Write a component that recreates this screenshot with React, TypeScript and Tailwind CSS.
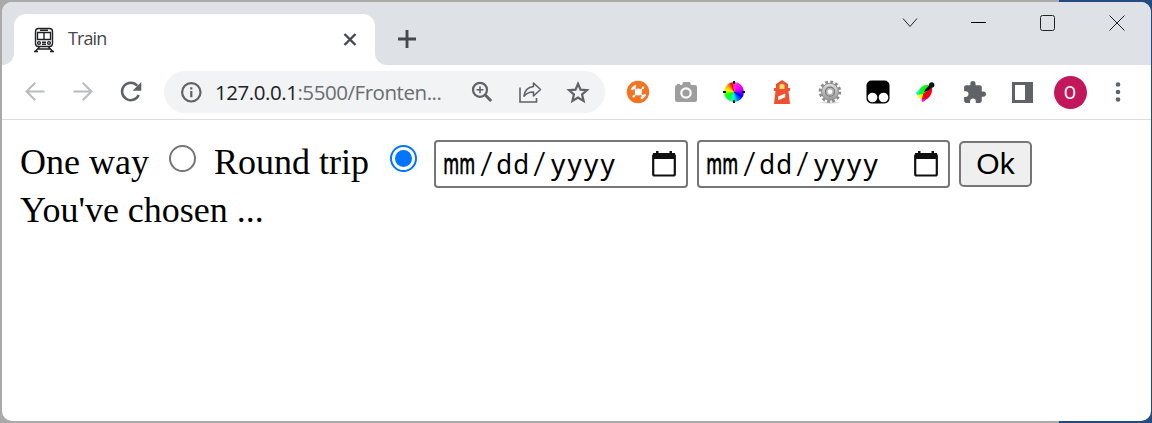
import type { ReactNode } from "react";

function Slot({ children }: { children: ReactNode }) {
  return <div className="flex h-[54px] w-12 shrink-0 items-center justify-center">{children}</div>;
}

function TrainIcon() {
  return (
    <svg width="24" height="26" viewBox="0 0 24 26" fill="none" stroke="#202124" strokeWidth="1.4">
      <rect x="3.5" y="1.5" width="17" height="18" rx="3" />
      <path d="M8 3.2h8M5.5 5.5h13v7h-13zM12 5.5v7" />
      <circle cx="7" cy="16" r="1.4" />
      <circle cx="17" cy="16" r="1.4" />
      <path d="M10 15.2h4M10 17.2h4M7.5 20L3 24.500M16.5 20l4.500 4.500M6 22h12M2 24.500h4M18 24.500h4" />
    </svg>
  );
}

function BackIcon({ flip = false }: { flip?: boolean }) {
  return (
    <svg width="22" height="22" viewBox="0 0 22 22" className={flip ? "-scale-x-100" : ""} fill="none" stroke="#b9bbbe" strokeWidth="2">
      <path d="M20.500 10.500H2.500M11.300 1.800L2.500 10.500l8.800 8.700" />
    </svg>
  );
}

function ReloadIcon() {
  return (
    <svg width="22" height="22" viewBox="0 0 22 22">
      <path d="M18.700 14A8.700 8.700 0 1 1 17.300 4.700" fill="none" stroke="#5f6368" strokeWidth="2.500" />
      <path d="M21.300 1v8.700h-8.700z" fill="#5f6368" />
    </svg>
  );
}

function InfoIcon() {
  return (
    <svg width="22" height="22" viewBox="0 0 22 22">
      <circle cx="11.300" cy="11.300" r="9.200" fill="none" stroke="#5f6368" strokeWidth="2.200" />
      <path d="M10.200 6.200h2.200v2.300h-2.200zM10.200 10h2.200v6.300h-2.200z" fill="#5f6368" />
    </svg>
  );
}

function ZoomIcon() {
  return (
    <svg width="22" height="22" viewBox="0 0 22 22" fill="none" stroke="#5f6368">
      <circle cx="9" cy="8.800" r="7" strokeWidth="2.200" />
      <path d="M14 13.800l6.200 6.200" strokeWidth="3" />
      <path d="M9 5.300v7M5.500 8.800h7" strokeWidth="1.600" />
    </svg>
  );
}

function ShareIcon() {
  return (
    <svg width="24" height="24" viewBox="0 0 24 24" fill="none" stroke="#5f6368" strokeWidth="1.600">
      <path d="M2 7.500v14.500h16.500v-4" />
      <path d="M15.500 3l7 6.500-7 6.500v-4c-4.500-.1-7 1-9.500 4.200.5-5 3.500-9 9.500-9.700z" strokeLinejoin="round" />
    </svg>
  );
}

function StarIcon() {
  return (
    <svg width="24" height="24" viewBox="0 0 24 24" fill="none" stroke="#5f6368" strokeWidth="2.200">
      <path d="M12 3.800l2.500 5.800 6.500.6-4.900 4.300 1.500 6.400-5.600-3.400-5.600 3.400 1.500-6.400L3 10.200l6.500-.6z" />
    </svg>
  );
}

function OrangeIcon() {
  return (
    <svg width="24" height="24" viewBox="0 0 24 24">
      <circle cx="12" cy="12" r="11.200" fill="#f47424" />
      <circle cx="12.300" cy="12" r="3.600" fill="#fff" />
      <path d="M8 8l9 8M17 8l-9 8" stroke="#fff" strokeWidth="1.200" />
      <path d="M6.200 9l3-2.800M15.800 18l3-2.800" stroke="#fff" strokeWidth="2.400" strokeLinecap="round" />
      <circle cx="17" cy="7.700" r="1.200" fill="#fff" />
      <circle cx="7.700" cy="16.300" r="1.200" fill="#fff" />
    </svg>
  );
}

function CameraIcon() {
  return (
    <svg width="24" height="24" viewBox="0 0 24 24">
      <path d="M3 4h3v1h2l1-3h7l1 3h4q2 0 2 2v13q0 2-2 2H3q-2 0-2-2V7q0-2 2-2z" fill="#9e9e9e" />
      <circle cx="12" cy="13" r="4.700" fill="none" stroke="#fff" strokeWidth="2.200" />
    </svg>
  );
}

function ColorWheelIcon() {
  return (
    <div className="relative flex h-6 w-6 items-center justify-center">
      <div className="h-5 w-5 rounded-full bg-[conic-gradient(#ff3dc8,#f0f_45deg,#b000ff_80deg,#00f_120deg,#0080ff_155deg,#0fd_180deg,#00ff38_220deg,#3f0_255deg,#e8ff00_285deg,#ffa000_315deg,#f00_345deg,#ff3dc8)]" />
      <svg className="absolute inset-0" width="24" height="24" viewBox="0 0 24 24" stroke="#111" strokeWidth="2">
        <path d="M12 1v3M12 20v3M1 12h3M20 12h3" />
      </svg>
    </div>
  );
}

function LighthouseIcon() {
  return (
    <svg width="24" height="24" viewBox="0 0 24 24">
      <path d="M12 0l6 4v4h2v3h-1.500L20 24H4l1.500-13H4V8h2V4z" fill="#f05030" />
      <path d="M9.500 5l2.500-1.500L14.500 5v4h-5z" fill="#ffde72" />
      <path d="M8.200 16.500l7-3v3.800l-7 3z" fill="#fff" />
    </svg>
  );
}

function GearIcon() {
  return (
    <svg width="24" height="24" viewBox="0 0 24 24">
      <defs>
        <linearGradient id="steel" x2="0" y2="1">
          <stop stopColor="#ddd" />
          <stop offset="1" stopColor="#999" />
        </linearGradient>
      </defs>
      <ellipse cx="12" cy="22.500" rx="9" ry="1.200" fill="#ddd" />
      <circle cx="12" cy="11.700" r="9.900" fill="none" stroke="#8a8a8a" strokeWidth="2.700" strokeDasharray="2.800 2.384" />
      <circle cx="12" cy="11.700" r="8.500" fill="url(#steel)" stroke="#888" strokeWidth="1" />
      <circle cx="12" cy="11.700" r="4.500" fill="#bbb" stroke="#777" strokeWidth="1.200" />
      <circle cx="12" cy="11.700" r="2.800" fill="#fff" stroke="#999" strokeWidth=".6" />
    </svg>
  );
}

function MaskIcon() {
  return (
    <svg width="24" height="24" viewBox="0 0 24 24">
      <rect x=".5" y=".5" width="23" height="23" rx="5" fill="#000" />
      <circle cx="6.500" cy="17.500" r="4.800" fill="#fff" />
      <circle cx="17.500" cy="17.500" r="4.800" fill="#fff" />
    </svg>
  );
}

function FeatherIcon() {
  return (
    <svg width="24" height="24" viewBox="0 0 24 24">
      <path d="M4 12C7 6 11 4 16 5l-6 10c-3 1-6 1-6-3z" fill="#0f1" />
      <path d="M18 7c1 7-3 12-9 14-2-2-1-5 0-7z" fill="#f10018" />
      <path d="M2 13l4-4c0 3-1 5-2 7z" fill="#00efed" />
      <path d="M3.500 15l5.500-1-1 5c-2 0-4-1-4.500-4z" fill="#ff0" />
      <path d="M8 18.500l4 1-3 2.500c-1-1-2-1-1-3.500z" fill="#ff00e8" />
      <path d="M10 12c1-3 3-5 6-7l2 2c-2 3-5 4-8 5z" fill="#000" />
      <circle cx="17.700" cy="5" r="2.700" fill="#111" />
    </svg>
  );
}

function PuzzleIcon() {
  return (
    <svg width="25" height="25" viewBox="0 0 24 24" fill="#5f6368">
      <path d="M20.500 11H19V7c0-1.100-.9-2-2-2h-4V3.500a2.500 2.500 0 0 0-5 0V5H4c-1.100 0-2 .9-2 2v3.800h1.500a2.700 2.700 0 0 1 0 5.400H2V20c0 1.100.9 2 2 2h3.800v-1.500a2.700 2.700 0 0 1 5.400 0V22H17c1.100 0 2-.9 2-2v-4h1.500a2.500 2.500 0 0 0 0-5z" />
    </svg>
  );
}

function WindowControls() {
  return (
    <div className="ml-auto flex h-[42px] items-center">
      <div className="flex w-[68px] justify-center">
        <svg width="16" height="12" viewBox="0 0 16 12" fill="none" stroke="#222"><path d="M1 1.500l7 8 7-8" /></svg>
      </div>
      <div className="flex w-[69px] justify-center">
        <svg width="16" height="2"><rect width="15" height="1" fill="#000" /></svg>
      </div>
      <div className="flex w-[69px] justify-center">
        <svg width="16" height="16" fill="none" stroke="#222"><rect x=".5" y=".5" width="14" height="15" rx="2" /></svg>
      </div>
      <div className="flex w-[69px] justify-center">
        <svg width="16" height="16" fill="none" stroke="#222"><path d="M.5.5l15 15M15.500.5l-15 15" /></svg>
      </div>
    </div>
  );
}

function TabStrip() {
  return (
    <div className="flex h-[63px] items-start bg-[#dee1e6]">
      <div className="mt-[51px] h-3 w-3 bg-[radial-gradient(circle_at_0_0,#dee1e6_11.5px,white_12.5px)]" />
      <div className="mt-3 flex h-[51px] w-[361px] items-center rounded-t-xl bg-white pr-[18px] pl-[18px]">
        <TrainIcon />
        <span className="ml-3 pb-[2px] font-['Open_Sans',sans-serif] text-[18px] tracking-[-0.9px] text-[#45484c]">Train</span>
        <svg className="ml-auto" width="14" height="14" viewBox="0 0 14 14" stroke="#45494d" strokeWidth="2.400">
          <path d="M1.500 1l11 11M12.500 1l-11 11" />
        </svg>
      </div>
      <div className="mt-[51px] h-3 w-3 bg-[radial-gradient(circle_at_100%_0,#dee1e6_11.5px,white_12.5px)]" />
      <svg className="mt-7 ml-[11px]" width="18" height="18" viewBox="0 0 18 18" stroke="#45494d" strokeWidth="2.900">
        <path d="M9 0v18M0 9h18" />
      </svg>
      <WindowControls />
    </div>
  );
}

function Toolbar() {
  return (
    <div className="flex h-[55px] items-center border-b border-[#dadce0] bg-white pl-[9px]">
      <Slot><BackIcon /></Slot>
      <Slot><BackIcon flip /></Slot>
      <Slot><ReloadIcon /></Slot>
      <div className="ml-[9px] flex h-[42px] w-[441px] items-center rounded-full bg-[#f1f3f4] pl-4">
        <InfoIcon />
        <span className="ml-[13px] w-[243px] shrink-0 whitespace-nowrap pt-px font-['Open_Sans',sans-serif] text-[20.5px] tracking-[-0.45px] text-[#6a6d71]">
          <span className="text-[#202124]">127.0.0.1</span>:5500/Fronten...
        </span>
        <Slot><ZoomIcon /></Slot>
        <Slot><ShareIcon /></Slot>
        <Slot><StarIcon /></Slot>
      </div>
      <div className="ml-[9px] flex">
        <Slot><OrangeIcon /></Slot>
        <Slot><CameraIcon /></Slot>
        <Slot><ColorWheelIcon /></Slot>
        <Slot><LighthouseIcon /></Slot>
        <Slot><GearIcon /></Slot>
        <Slot><MaskIcon /></Slot>
        <Slot><FeatherIcon /></Slot>
        <Slot><PuzzleIcon /></Slot>
        <Slot>
          <div className="h-[21px] w-[21px] border-[3px] border-r-[8px] border-[#5f6368]" />
        </Slot>
        <Slot>
          <div className="flex h-[33px] w-[33px] shrink-0 items-center justify-center rounded-full bg-[#c2185b] font-['Roboto',sans-serif] text-[18px] text-white">O</div>
        </Slot>
        <Slot>
          <svg width="6" height="20" fill="#5f6368">
            <circle cx="3" cy="2.500" r="2.300" />
            <circle cx="3" cy="10" r="2.300" />
            <circle cx="3" cy="17.500" r="2.300" />
          </svg>
        </Slot>
      </div>
    </div>
  );
}

const glyphClass: Record<string, string> = {
  m: "flex w-[16.5px] scale-x-[.6] justify-center font-medium [-webkit-text-stroke:0.4px_black]",
  d: "flex w-[16.5px] scale-x-[.92] justify-center",
  y: "flex w-[16.5px] justify-center",
  "/": "mx-[2.1px] flex w-[16.5px] scale-x-[1.25] scale-y-[1.15] justify-center font-light",
};

function DateField() {
  return (
    <div className="flex h-12 shrink-0 items-center justify-between rounded-[4px] border-2 border-[#767676] pr-[9px] pl-[6.5px]">
      <span className="flex pb-[3px] font-['Noto_Sans',sans-serif] text-[28px] leading-none">
        {"mm/dd/yyyy".split("").map((glyph, i) => (
          <span key={i} className={glyphClass[glyph]}>{glyph}</span>
        ))}
      </span>
      <svg width="26" height="28" viewBox="0 0 26 28">
        <rect x="2.200" y="4.500" width="21.600" height="21" rx="1.500" fill="none" stroke="#101010" strokeWidth="2.200" />
        <path d="M2 3h22v6H2zM5 1h2.500v3H5zM18.500 1H21v3h-2.500z" fill="#101010" />
      </svg>
    </div>
  );
}

export default function App() {
  return (
    <div className="h-[423px] w-[1152px] overflow-hidden bg-[linear-gradient(90deg,#aaa_0,#aaa_1059px,#244b80_1059px)] pt-[2px] pl-[2px]">
      <div className="flex h-[419px] w-[1149px] flex-col overflow-hidden rounded-[10px] bg-white">
        <TabStrip />
        <Toolbar />
        <main className="pt-5 pl-[18px] font-['Liberation_Serif',serif] text-[36px] leading-[45px] text-black">
          <div className="flex h-[48px] items-start">
            <span className="w-[149px] whitespace-nowrap">One way</span>
            <span className="mt-[5px] h-[27px] w-[27px] shrink-0 rounded-full border-2 border-[#767676]" />
            <span className="ml-[18px] w-[176px] whitespace-nowrap">Round trip</span>
            <span className="mt-[5px] flex h-[27px] w-[27px] shrink-0 items-center justify-center rounded-full border-2 border-[#0075ff]">
              <span className="h-[17px] w-[17px] rounded-full bg-[#0075ff]" />
            </span>
            <div className="ml-[17px] grid w-[516px] grid-cols-[254px_253px] gap-[9px]">
              <DateField />
              <DateField />
            </div>
            <button className="ml-[9px] mt-px flex h-[46px] w-[73px] shrink-0 items-center justify-center rounded-[5px] border-2 border-[#767676] bg-[#efefef] font-['Liberation_Sans',sans-serif] text-[30px] leading-none">
              Ok
            </button>
          </div>
          <p>You've chosen ...</p>
        </main>
      </div>
    </div>
  );
}
